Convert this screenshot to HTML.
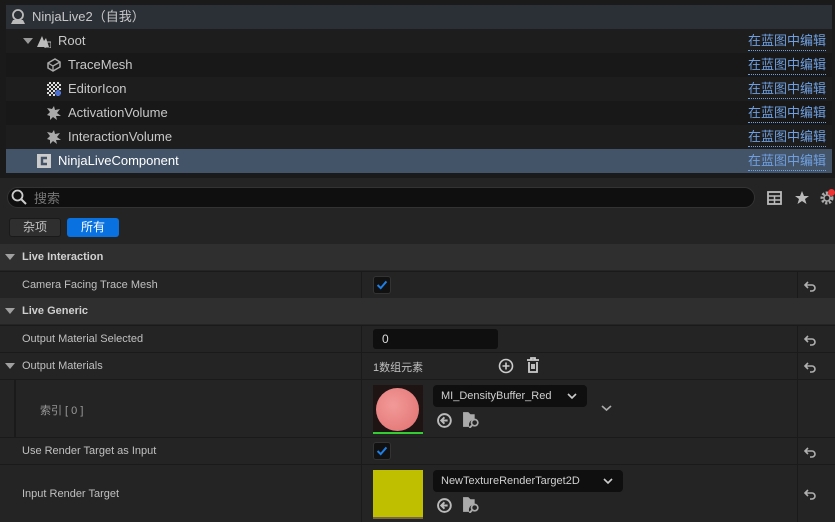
<!DOCTYPE html><html><head><meta charset="utf-8"><style>
*{box-sizing:border-box;margin:0;padding:0}
body{width:835px;height:522px;overflow:hidden;background:#242424;font-family:"Liberation Sans","Noto Sans CJK SC",sans-serif;color:#c0c0c0;position:relative}
.abs{position:absolute}
.top{left:0;top:0;width:835px;height:178px;background:#1a1a1a}
.row{position:absolute;left:6px;width:826px;height:24px;font-size:13px;line-height:24px;color:#c8c8c8}
.link{position:absolute;right:6px;top:0;color:#6f9fe0;font-size:13px;border-bottom:1px dotted #6f9fe0;line-height:18px;top:3px}
.ico{position:absolute;top:5px;width:14px;height:14px}
.sec{position:absolute;left:0;width:835px;height:26px;background:#2f2f2f;font-size:11px;font-weight:bold;color:#d0d0d0;line-height:26px}
.prop{position:absolute;left:0;width:835px;background:#242424;font-size:11px;color:#c0c0c0;border-top:1px solid #1a1a1a}
.tri{position:absolute;left:5px;width:0;height:0;border-left:5px solid transparent;border-right:5px solid transparent;border-top:6px solid #a0a0a0}
.vd{position:absolute;top:0;bottom:0;width:1px;background:#1a1a1a}
.chk{position:absolute;left:373px;width:18px;height:18px;background:#111;border-radius:3px;border:1px solid #333}
.reset{position:absolute;left:803px;}
.dd{position:absolute;background:#0f0f0f;border-radius:4px;font-size:11px;color:#d0d0d0;line-height:22px;padding-left:8px;height:22px}
</style></head><body>
<svg width="0" height="0" style="position:absolute"><defs>
<symbol id="rs" viewBox="0 0 14 14"><path d="M5 3L2 6l3 3M2 6h7a3 3 0 0 1 0 6H7" fill="none" stroke="#b0b0b0" stroke-width="1.6"/></symbol>
<symbol id="ck" viewBox="0 0 18 18"><path d="M4 9l3.5 3.5L14 5" fill="none" stroke="#1e7fe6" stroke-width="2.2"/></symbol>
<symbol id="br" viewBox="0 0 16 16"><circle cx="7" cy="8" r="6" fill="none" stroke="#bbb" stroke-width="1.8"/><path d="M10 8H4M7 5L4 8l3 3" fill="none" stroke="#bbb" stroke-width="1.8"/></symbol>
<symbol id="fd" viewBox="0 0 18 16"><path d="M1 1h5l2 2h4v5a5 5 0 0 0-5 7H1z" fill="#aaa"/><circle cx="12" cy="11" r="3" fill="none" stroke="#aaa" stroke-width="1.6"/><path d="M9.5 13.5L7 16" stroke="#aaa" stroke-width="1.8"/></symbol>
<symbol id="vol" viewBox="0 0 14 14"><path d="M0 2l5 1 2-3 1 4 5-1-3 4 4 3-5 0 1 4-4-3-3 3 0-4-3-1 3-3z" fill="#aaa"/></symbol>
</defs></svg>
<div class="abs top"></div>
<div class="row" style="top:5px;background:#2b3036"><svg class="abs" style="left:4px;top:4px" width="16" height="16"><circle cx="8" cy="6" r="5" fill="none" stroke="#bbb" stroke-width="1.8"/><path d="M1 15h14l-2-4H3z" fill="#bbb"/></svg><span class="abs" style="left:26px">NinjaLive2（自我）</span></div>
<div class="row" style="top:29px;background:#1d1d1d"><span class="abs" style="left:17px;top:9px;border-left:5px solid transparent;border-right:5px solid transparent;border-top:6px solid #999"></span><svg class="ico" style="left:31px"><path d="M0 13L5 2l2 5 2-3 3 9z" fill="#bbb"/><rect x="8" y="8" width="6" height="6" fill="none" stroke="#bbb"/></svg><span class="abs" style="left:52px">Root</span><span class="link">在蓝图中编辑</span></div>
<div class="row" style="top:53px;background:#181818"><svg class="ico" style="left:41px" viewBox="0 0 14 14"><path d="M1 5l7-4 5 3v5l-7 4-5-3z" fill="none" stroke="#aaa" stroke-width="1.5"/><path d="M1 5l5 3 7-4M6 8v5" fill="none" stroke="#aaa" stroke-width="1.3"/></svg><span class="abs" style="left:62px">TraceMesh</span><span class="link">在蓝图中编辑</span></div>
<div class="row" style="top:77px;background:#1d1d1d"><span class="ico" style="left:41px;background:repeating-conic-gradient(#ddd 0 25%,#222 0 50%) 0 0/4px 4px"></span><span class="abs" style="left:49px;top:13px;width:6px;height:6px;border-radius:50%;background:#4a6fd0"></span><span class="abs" style="left:62px">EditorIcon</span><span class="link">在蓝图中编辑</span></div>
<div class="row" style="top:101px;background:#181818"><svg class="ico" style="left:41px"><use href="#vol"/></svg><span class="abs" style="left:62px">ActivationVolume</span><span class="link">在蓝图中编辑</span></div>
<div class="row" style="top:125px;background:#1d1d1d"><svg class="ico" style="left:41px"><use href="#vol"/></svg><span class="abs" style="left:62px">InteractionVolume</span><span class="link">在蓝图中编辑</span></div>
<div class="row" style="top:149px;background:#435469;color:#fff"><svg class="ico" style="left:31px" viewBox="0 0 14 14"><path d="M0 0h14v14H0z" fill="#ccc"/><path d="M10 4H5v6h5" fill="none" stroke="#435469" stroke-width="2.4"/></svg><span class="abs" style="left:52px">NinjaLiveComponent</span><span class="link">在蓝图中编辑</span></div>

<div class="abs" style="left:7px;top:187px;width:748px;height:21px;border-radius:11px;background:#0f0f0f;border:1px solid #333"></div>
<svg class="abs" style="left:11px;top:189px" width="16" height="16"><circle cx="6.5" cy="6.5" r="5" fill="none" stroke="#ccc" stroke-width="1.8"/><path d="M10 10l5 5" stroke="#ccc" stroke-width="2"/></svg>
<div class="abs" style="left:34px;top:188px;font-size:13px;color:#777">搜索</div>
<svg class="abs" style="left:767px;top:191px" width="15" height="14"><rect x="1" y="1" width="13" height="12" fill="none" stroke="#bbb" stroke-width="1.8"/><path d="M1 5h13M1 9h13M7.5 5v8" stroke="#bbb" stroke-width="1.5"/></svg>
<svg class="abs" style="left:794px;top:190px" width="16" height="16"><path d="M8 1l2 5h5l-4 3 1.5 5L8 11l-4.5 3L5 9 1 6h5z" fill="#bbb"/></svg>
<svg class="abs" style="left:819px;top:190px" width="16" height="16"><circle cx="8" cy="8" r="5" fill="none" stroke="#aaa" stroke-width="3" stroke-dasharray="2.2 1.5"/><circle cx="8" cy="8" r="3" fill="none" stroke="#aaa" stroke-width="1.5"/></svg>
<div class="abs" style="left:828px;top:189px;width:7px;height:7px;background:#e33;border-radius:50%"></div>
<div class="abs" style="left:9px;top:218px;width:52px;height:19px;background:#2f2f2f;border:1px solid #1a1a1a;border-radius:3px;font-size:12px;text-align:center;line-height:17px">杂项</div>
<div class="abs" style="left:67px;top:218px;width:52px;height:19px;background:#0a72e0;border-radius:3px;font-size:12px;text-align:center;line-height:19px;color:#fff">所有</div>

<div class="sec" style="top:244px"><span class="tri" style="top:10px"></span><span class="abs" style="left:22px">Live Interaction</span></div>
<div class="prop" style="top:271px;height:27px"><span class="abs" style="left:22px;top:7px">Camera Facing Trace Mesh</span><div class="vd" style="left:361px"></div><div class="vd" style="left:797px"></div><div class="chk" style="top:4px"><svg width="16" height="16" viewBox="0 0 18 18"><use href="#ck"/></svg></div><svg class="reset" style="top:7px" width="14" height="14"><use href="#rs"/></svg></div>
<div class="sec" style="top:298px"><span class="tri" style="top:10px"></span><span class="abs" style="left:22px">Live Generic</span></div>
<div class="prop" style="top:325px;height:27px"><span class="abs" style="left:22px;top:7px">Output Material Selected</span><div class="vd" style="left:361px"></div><div class="vd" style="left:797px"></div><div class="abs" style="left:373px;top:3px;width:125px;height:20px;background:#0f0f0f;border-radius:3px;font-size:12px;padding-left:9px;line-height:20px;color:#ddd">0</div><svg class="reset" style="top:7px" width="14" height="14"><use href="#rs"/></svg></div>
<div class="prop" style="top:352px;height:27px"><span class="tri" style="top:10px"></span><span class="abs" style="left:22px;top:7px">Output Materials</span><div class="vd" style="left:361px"></div><div class="vd" style="left:797px"></div><span class="abs" style="left:373px;top:6px">1数组元素</span>
<svg class="abs" style="left:498px;top:5px" width="16" height="16"><circle cx="8" cy="8" r="6.5" fill="none" stroke="#ccc" stroke-width="1.6"/><path d="M8 4.5v7M4.5 8h7" stroke="#ccc" stroke-width="1.6"/></svg>
<svg class="abs" style="left:525px;top:4px" width="16" height="17"><path d="M2 3h12M6 3V1h4v2M4 5v10h8V5M7 7v5M9 7v5" fill="none" stroke="#ccc" stroke-width="1.8"/></svg>
<svg class="reset" style="top:7px" width="14" height="14"><use href="#rs"/></svg></div>
<div class="prop" style="top:379px;height:58px"><div class="abs" style="left:14px;top:0;bottom:0;width:2px;background:#1a1a1a"></div><span class="abs" style="left:40px;top:22px;color:#999">索引 [ 0 ]</span><div class="vd" style="left:361px"></div><div class="vd" style="left:797px"></div>
<div class="abs" style="left:373px;top:5px;width:50px;height:49px;background:#1e1414"><div class="abs" style="left:3px;top:3px;width:43px;height:43px;border-radius:50%;background:radial-gradient(circle at 40% 40%,#f29a98,#e07070)"></div><div class="abs" style="left:0;bottom:0;width:50px;height:2px;background:#3c3"></div></div>
<div class="dd" style="left:433px;top:5px;width:154px">MI_DensityBuffer_Red<svg class="abs" style="right:10px;top:7px" width="10" height="8"><path d="M1 2l4 4 4-4" fill="none" stroke="#ccc" stroke-width="1.6"/></svg></div>
<svg class="abs" style="left:601px;top:24px" width="11" height="8"><path d="M1 2l4.5 4 4.5-4" fill="none" stroke="#aaa" stroke-width="1.6"/></svg>
<svg class="abs" style="left:437px;top:32px" width="17" height="17"><use href="#br"/></svg><svg class="abs" style="left:462px;top:31px" width="19" height="17"><use href="#fd"/></svg></div>
<div class="prop" style="top:437px;height:27px"><span class="abs" style="left:22px;top:7px">Use Render Target as Input</span><div class="vd" style="left:361px"></div><div class="vd" style="left:797px"></div><div class="chk" style="top:4px"><svg width="16" height="16" viewBox="0 0 18 18"><use href="#ck"/></svg></div><svg class="reset" style="top:7px" width="14" height="14"><use href="#rs"/></svg></div>
<div class="prop" style="top:464px;height:58px"><span class="abs" style="left:22px;top:23px">Input Render Target</span><div class="vd" style="left:361px"></div><div class="vd" style="left:797px"></div>
<div class="abs" style="left:373px;top:5px;width:50px;height:49px;background:#bfbf00;border-bottom:2px solid #764"></div>
<div class="dd" style="left:433px;top:5px;width:190px">NewTextureRenderTarget2D<svg class="abs" style="right:10px;top:7px" width="10" height="8"><path d="M1 2l4 4 4-4" fill="none" stroke="#ccc" stroke-width="1.6"/></svg></div>
<svg class="abs" style="left:437px;top:32px" width="17" height="17"><use href="#br"/></svg><svg class="abs" style="left:462px;top:31px" width="19" height="17"><use href="#fd"/></svg><svg class="reset" style="top:22px" width="14" height="14"><use href="#rs"/></svg></div>
</body></html>
